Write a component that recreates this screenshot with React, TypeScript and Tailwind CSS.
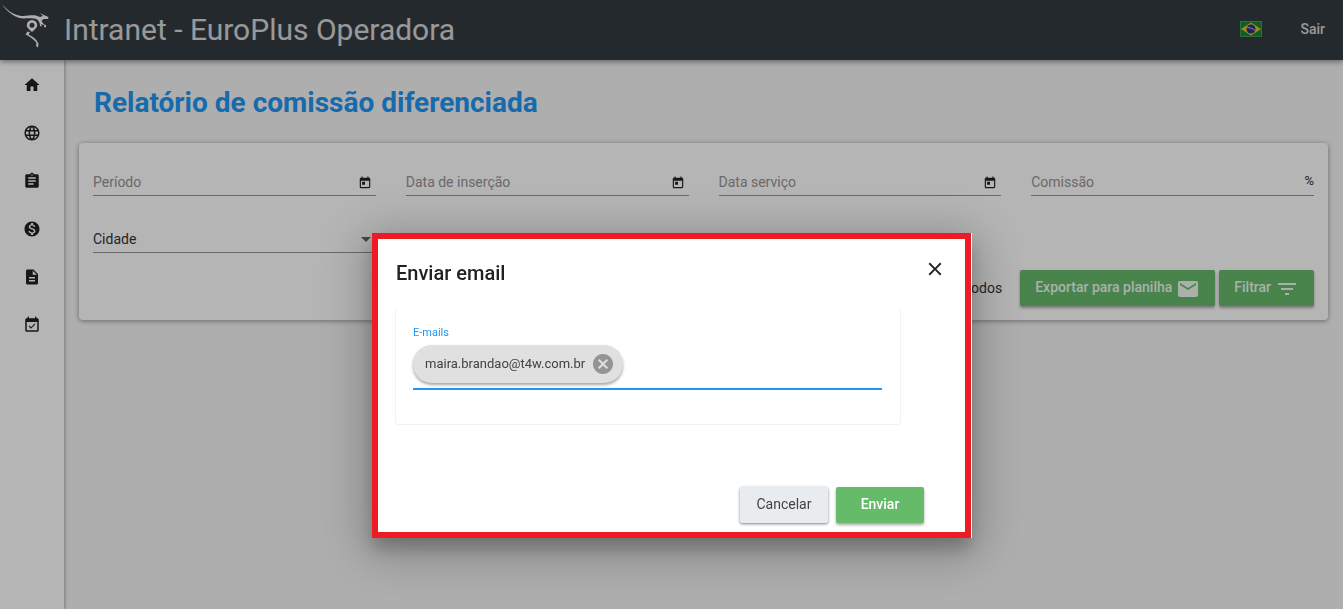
import React from "react";
import {
  MdArrowDropDown,
  MdAssignment,
  MdCancel,
  MdClose,
  MdDescription,
  MdEmail,
  MdEventAvailable,
  MdFilterList,
  MdHome,
  MdLanguage,
  MdMonetizationOn,
  MdToday,
} from "react-icons/md";

/* ---------- Data ---------- */

const menuItems = [
  { label: "Início", icon: MdHome },
  { label: "Site", icon: MdLanguage },
  { label: "Cadastros", icon: MdAssignment },
  { label: "Financeiro", icon: MdMonetizationOn },
  { label: "Relatórios", icon: MdDescription },
  { label: "Reservas", icon: MdEventAvailable },
];

const dateFields = [
  { id: "periodo", label: "Período" },
  { id: "insercao", label: "Data de inserção" },
  { id: "servico", label: "Data serviço" },
];

/* ---------- Drawings ---------- */

function Logo() {
  return (
    <svg viewBox="0 0 64 60" className="h-[60px] w-16 shrink-0 self-start" fill="#f5f5f5" aria-hidden="true">
      <path d="M1 3C6 9 12 14.500 20 15.700C26 16.500 32 14.500 36 15.500L40 17L43 16L40 13L45 15.500L48.500 17L48 19L43.500 19L41.500 21L44 24.500L46 25L46 27.500L44 27L44.500 25.500L41 24L42 26.500L40 26C40 22 38 19 34 18.500C28 17.500 23 19.500 18 17.500C10 14.500 5 8.500 1 3Z" />
      <path
        fillRule="evenodd"
        d="M32 20A5.200 5.200 0 0 0 26.800 25.300C26.800 28 30 30 32 32C34 30 37.200 28 37.200 25.300A5.200 5.200 0 0 0 32 20ZM32 22.800A2.500 2.500 0 1 1 32 27.800A2.500 2.500 0 1 1 32 22.800Z"
      />
      <path d="M27.500 31.500L25.500 34.500C30 36.500 34.500 40 36.500 43L36 46L38 47.500L38.500 43.500C36.500 39 32 36 28.500 34.500L30 32.500Z" />
    </svg>
  );
}

function BrazilFlag() {
  return (
    <svg viewBox="0 0 22 16" className="h-4 w-[22px]" aria-hidden="true">
      <rect width="22" height="16" fill="#16823a" />
      <rect x="0.500" y="0.500" width="21" height="15" fill="none" stroke="#3f9a55" />
      <path d="M11 1.500L21 8L11 14.500L1 8Z" fill="#e8bc22" />
      <circle cx="11" cy="8" r="4.500" fill="#2b2f80" />
      <path d="M7 6.500C10 6.500 13 7.500 15 9.500" stroke="#b9c4dc" fill="none" />
    </svg>
  );
}

/* ---------- Page parts ---------- */

function Header() {
  return (
    <header className="relative z-10 flex h-[60px] items-center bg-[#343a40] pb-0.5 pr-[18px] text-white/80 shadow-[0_2px_5px_rgba(0,0,0,0.4)]">
      <Logo />
      <span className="text-[30px]">Intranet - EuroPlus Operadora</span>
      <button type="button" aria-label="Português" className="ml-auto mr-[38px]">
        <BrazilFlag />
      </button>
      <a href="#sair" className="text-sm font-medium">
        Sair
      </a>
    </header>
  );
}

function Sidebar() {
  return (
    <nav className="w-16 shrink-0 bg-white pt-px shadow-[1px_0_3px_rgba(0,0,0,0.3)]">
      {menuItems.map(({ label, icon: Icon }) => (
        <a key={label} href="#menu" aria-label={label} className="flex h-12 items-center justify-center text-[#212121]">
          <Icon className="size-[18px]" />
        </a>
      ))}
    </nav>
  );
}

const fieldClass = "flex h-7 items-center border-b border-[#949494] text-sm";
const inputClass = "min-w-0 flex-1 bg-transparent outline-none placeholder:text-[#949494]";
const greenButton = "flex h-9 items-center rounded-[2px] bg-[#66bb6a] pb-0.5 text-sm font-medium shadow-[0_2px_3px_rgba(0,0,0,0.35)]";

function FilterForm() {
  return (
    <form className="rounded bg-white px-3.5 pb-3.5 pt-[25px] text-[#333] shadow-[0_1px_5px_rgba(0,0,0,0.4)]">
      <div className="grid grid-cols-4 gap-x-[30px] gap-y-[29px]">
        {dateFields.map((field) => (
          <div key={field.id} className={fieldClass}>
            <input id={field.id} aria-label={field.label} placeholder={field.label} className={inputClass} />
            <button type="button" aria-label={`Abrir calendário: ${field.label}`} className="mr-1 pt-0.5 text-[#212529]">
              <MdToday className="size-3.5" />
            </button>
          </div>
        ))}
        <div className={fieldClass}>
          <input id="comissao" aria-label="Comissão" placeholder="Comissão" className={inputClass} />
          <span className="text-[13px]">%</span>
        </div>
        <div className={fieldClass}>
          <select aria-label="Cidade" className="min-w-0 flex-1 appearance-none bg-transparent outline-none">
            <option>Cidade</option>
          </select>
          <MdArrowDropDown className="pointer-events-none -ml-5 size-6 -mr-0.5 text-[#666]" />
        </div>
      </div>
      <div className="mt-[17px] flex items-center justify-end gap-1">
        <label className="mr-3.5 flex items-center gap-2 text-sm">
          <input type="checkbox" />
          Todos
        </label>
        <button type="button" className={`${greenButton} gap-1 px-[15px] text-white/90`}>
          Exportar para planilha
          <MdEmail className="mt-1 size-6" />
        </button>
        <button type="submit" className={`${greenButton} gap-1 px-[15px] text-white/90`}>
          Filtrar
          <MdFilterList className="mt-1 size-6" />
        </button>
      </div>
    </form>
  );
}

function EmailDialog() {
  return (
    <div className="fixed inset-0 z-20 flex items-start justify-center bg-black/29 pt-[233px]">
      <div
        role="dialog"
        aria-labelledby="dialog-title"
        className="w-[599px] border-6 border-[#ed1c24] bg-white pb-[9px] pl-[17px] pr-[19px] pt-[18px] text-[#212121] shadow-[1px_0_0_#fff,0_11px_15px_rgba(0,0,0,0.2),0_9px_46px_8px_rgba(0,0,0,0.25)]"
      >
        <div className="flex h-8 items-center justify-between pl-px">
          <h2 id="dialog-title" className="text-xl font-medium">
            Enviar email
          </h2>
          <button type="button" aria-label="Fechar" className="mb-2">
            <MdClose className="size-[22px]" />
          </button>
        </div>
        <div className="mr-[45px] mt-5 rounded border border-t-0 border-[#f2f2f2] pb-[34px] pl-[17px] pr-[18px] pt-4">
          <label htmlFor="emails" className="block text-[11px] leading-4 text-[#2196f3]">
            E-mails
          </label>
          <div className="mt-1 flex items-center border-b-2 border-[#2196f3] pb-[5px]">
            <span className="flex h-[38px] items-center gap-1.5 rounded-full bg-[#e0e0e0] pl-3 pr-2 text-[13px] text-[#424242] shadow-[0_2px_3px_rgba(0,0,0,0.35)]">
              maira.brandao@t4w.com.br
              <button type="button" aria-label="Remover" className="text-[#949494]">
                <MdCancel className="size-6" />
              </button>
            </span>
            <input id="emails" className="min-w-0 flex-1 bg-transparent outline-none" />
          </div>
        </div>
        <div className="mr-[22px] mt-[62px] flex justify-end gap-2">
          <button
            type="button"
            className="h-9 w-[88px] rounded-[2px] bg-[#e9ecef] pb-0.5 text-sm text-[#424242] shadow-[0_1px_3px_rgba(0,0,0,0.5)]"
          >
            Cancelar
          </button>
          <button type="button" className={`${greenButton} w-[88px] justify-center text-white`}>
            Enviar
          </button>
        </div>
      </div>
    </div>
  );
}

/* ---------- App ---------- */

export default function App() {
  return (
    <div className="flex min-h-screen flex-col bg-[#f5f5f5] font-[Roboto,sans-serif]">
      <Header />
      <div className="flex flex-1">
        <Sidebar />
        <main className="min-w-0 flex-1 px-[15px]">
          <h1 className="mb-[19px] mt-[22px] pl-[15px] text-[28px] font-bold leading-[42px] text-[#2196f3]">
            Relatório de comissão diferenciada
          </h1>
          <FilterForm />
        </main>
      </div>
      <EmailDialog />
    </div>
  );
}
